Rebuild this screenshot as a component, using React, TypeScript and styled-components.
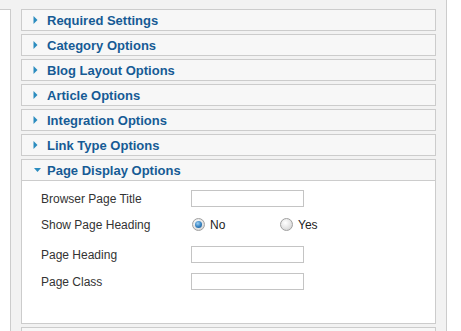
import styled, { createGlobalStyle } from "styled-components";

const GlobalStyle = createGlobalStyle`
  html, body {
    margin: 0;
    padding: 0;
    background: #f2f2f2;
    font-family: "Liberation Sans", Arial, sans-serif;
  }
`;

const sections = [
  "Required Settings",
  "Category Options",
  "Blog Layout Options",
  "Article Options",
  "Integration Options",
  "Link Type Options",
];

const App = () => {
  return (
    <Page>
      <GlobalStyle />
      <LeftCol />
      <MiddleCol>
        {sections.map((title) => (
          <Panel key={title}>
            <Title>
              <Arrow open={false} />
              {title}
            </Title>
          </Panel>
        ))}
        <Panel>
          <Title open>
            <Arrow open />
            Page Display Options
          </Title>
          <Content>
            <Row h={17}>
              <Label>Browser Page Title</Label>
              <TextInput type="text" />
            </Row>
            <Row h={35}>
              <Label>Show Page Heading</Label>
              <Options>
                <Option>
                  <Radio type="radio" name="show_page_heading" defaultChecked />
                  No
                </Option>
                <Option>
                  <Radio type="radio" name="show_page_heading" />
                  Yes
                </Option>
              </Options>
            </Row>
            <Row h={25}>
              <Label>Page Heading</Label>
              <TextInput type="text" />
            </Row>
            <Row h={29}>
              <Label>Page Class</Label>
              <TextInput type="text" />
            </Row>
          </Content>
        </Panel>
        <Panel>
          <Title />
        </Panel>
      </MiddleCol>
      <RightCol />
    </Page>
  );
};

const Arrow = ({ open }: { open: boolean }) =>
  open ? (
    <ArrowIcon width="7" height="5" viewBox="0 0 7 5" left={12}>
      <polygon points="0,0.5 7,0.5 3.5,4.5" fill="#2b8cbf" />
    </ArrowIcon>
  ) : (
    <ArrowIcon width="5" height="8" viewBox="0 0 5 8" left={11}>
      <polygon points="0.5,0 4.5,4 0.5,8" fill="#2b8cbf" />
    </ArrowIcon>
  );

const Page = styled.div`
  display: flex;
  width: 461px;
  height: 331px;
  overflow: hidden;
`;

const LeftCol = styled.div`
  width: 10px;
  margin-top: 9px;
  background: #ffffff;
  border-top: 1px solid #cccccc;
  border-right: 1px solid #cccccc;
`;

const MiddleCol = styled.div`
  width: 415px;
  padding: 9px 10px 0 10px;
  background: #f2f2f2;
`;

const RightCol = styled.div`
  flex: 1;
  background: #ffffff;
  border-left: 1px solid #cccccc;
`;

const Panel = styled.div`
  border: 1px solid #cccccc;
  background: #ffffff;
  margin-bottom: 3px;
`;

const Title = styled.h3<{ open?: boolean }>`
  display: flex;
  align-items: center;
  margin: 0;
  height: 19px;
  padding: 1px 0 0 25px;
  background: #f7f7f7;
  color: #165b95;
  font-size: 13px;
  font-weight: bold;
  line-height: 19px;
  position: relative;
  border-bottom: ${(p) => (p.open ? "1px solid #cccccc" : "none")};
`;

const ArrowIcon = styled.svg<{ left: number }>`
  position: absolute;
  left: ${(p) => p.left}px;
  top: 50%;
  transform: translateY(-50%);
`;

const Content = styled.div`
  height: 133px;
  padding: 9px 0 0 19px;
`;

const Row = styled.div<{ h: number }>`
  display: flex;
  align-items: center;
  height: ${(p) => p.h}px;
`;

const Label = styled.span`
  width: 150px;
  font-size: 12px;
  color: #333333;
`;

const TextInput = styled.input`
  box-sizing: border-box;
  width: 113px;
  height: 17px;
  margin: 0;
  padding: 0 2px;
  border: 1px solid #c4c4c4;
  background: #ffffff;
  font-size: 11px;
`;

const Options = styled.div`
  display: flex;
`;

const Option = styled.label`
  display: inline-flex;
  align-items: center;
  width: 88px;
  font-size: 12px;
  color: #222222;
`;

const Radio = styled.input`
  appearance: none;
  box-sizing: border-box;
  width: 13px;
  height: 13px;
  margin: 0 5px 0 1px;
  border-radius: 50%;
  border: 1px solid #a0a0a0;
  background: radial-gradient(circle at 40% 35%, #ffffff 0%, #e4e4e4 55%, #c8c8c8 100%);
  position: relative;

  &:checked::after {
    content: "";
    position: absolute;
    left: 2px;
    top: 2px;
    width: 7px;
    height: 7px;
    border-radius: 50%;
    background: radial-gradient(circle at 40% 35%, #9fd0f2 0%, #3a86c4 50%, #114d86 100%);
  }
`;

export default App;
